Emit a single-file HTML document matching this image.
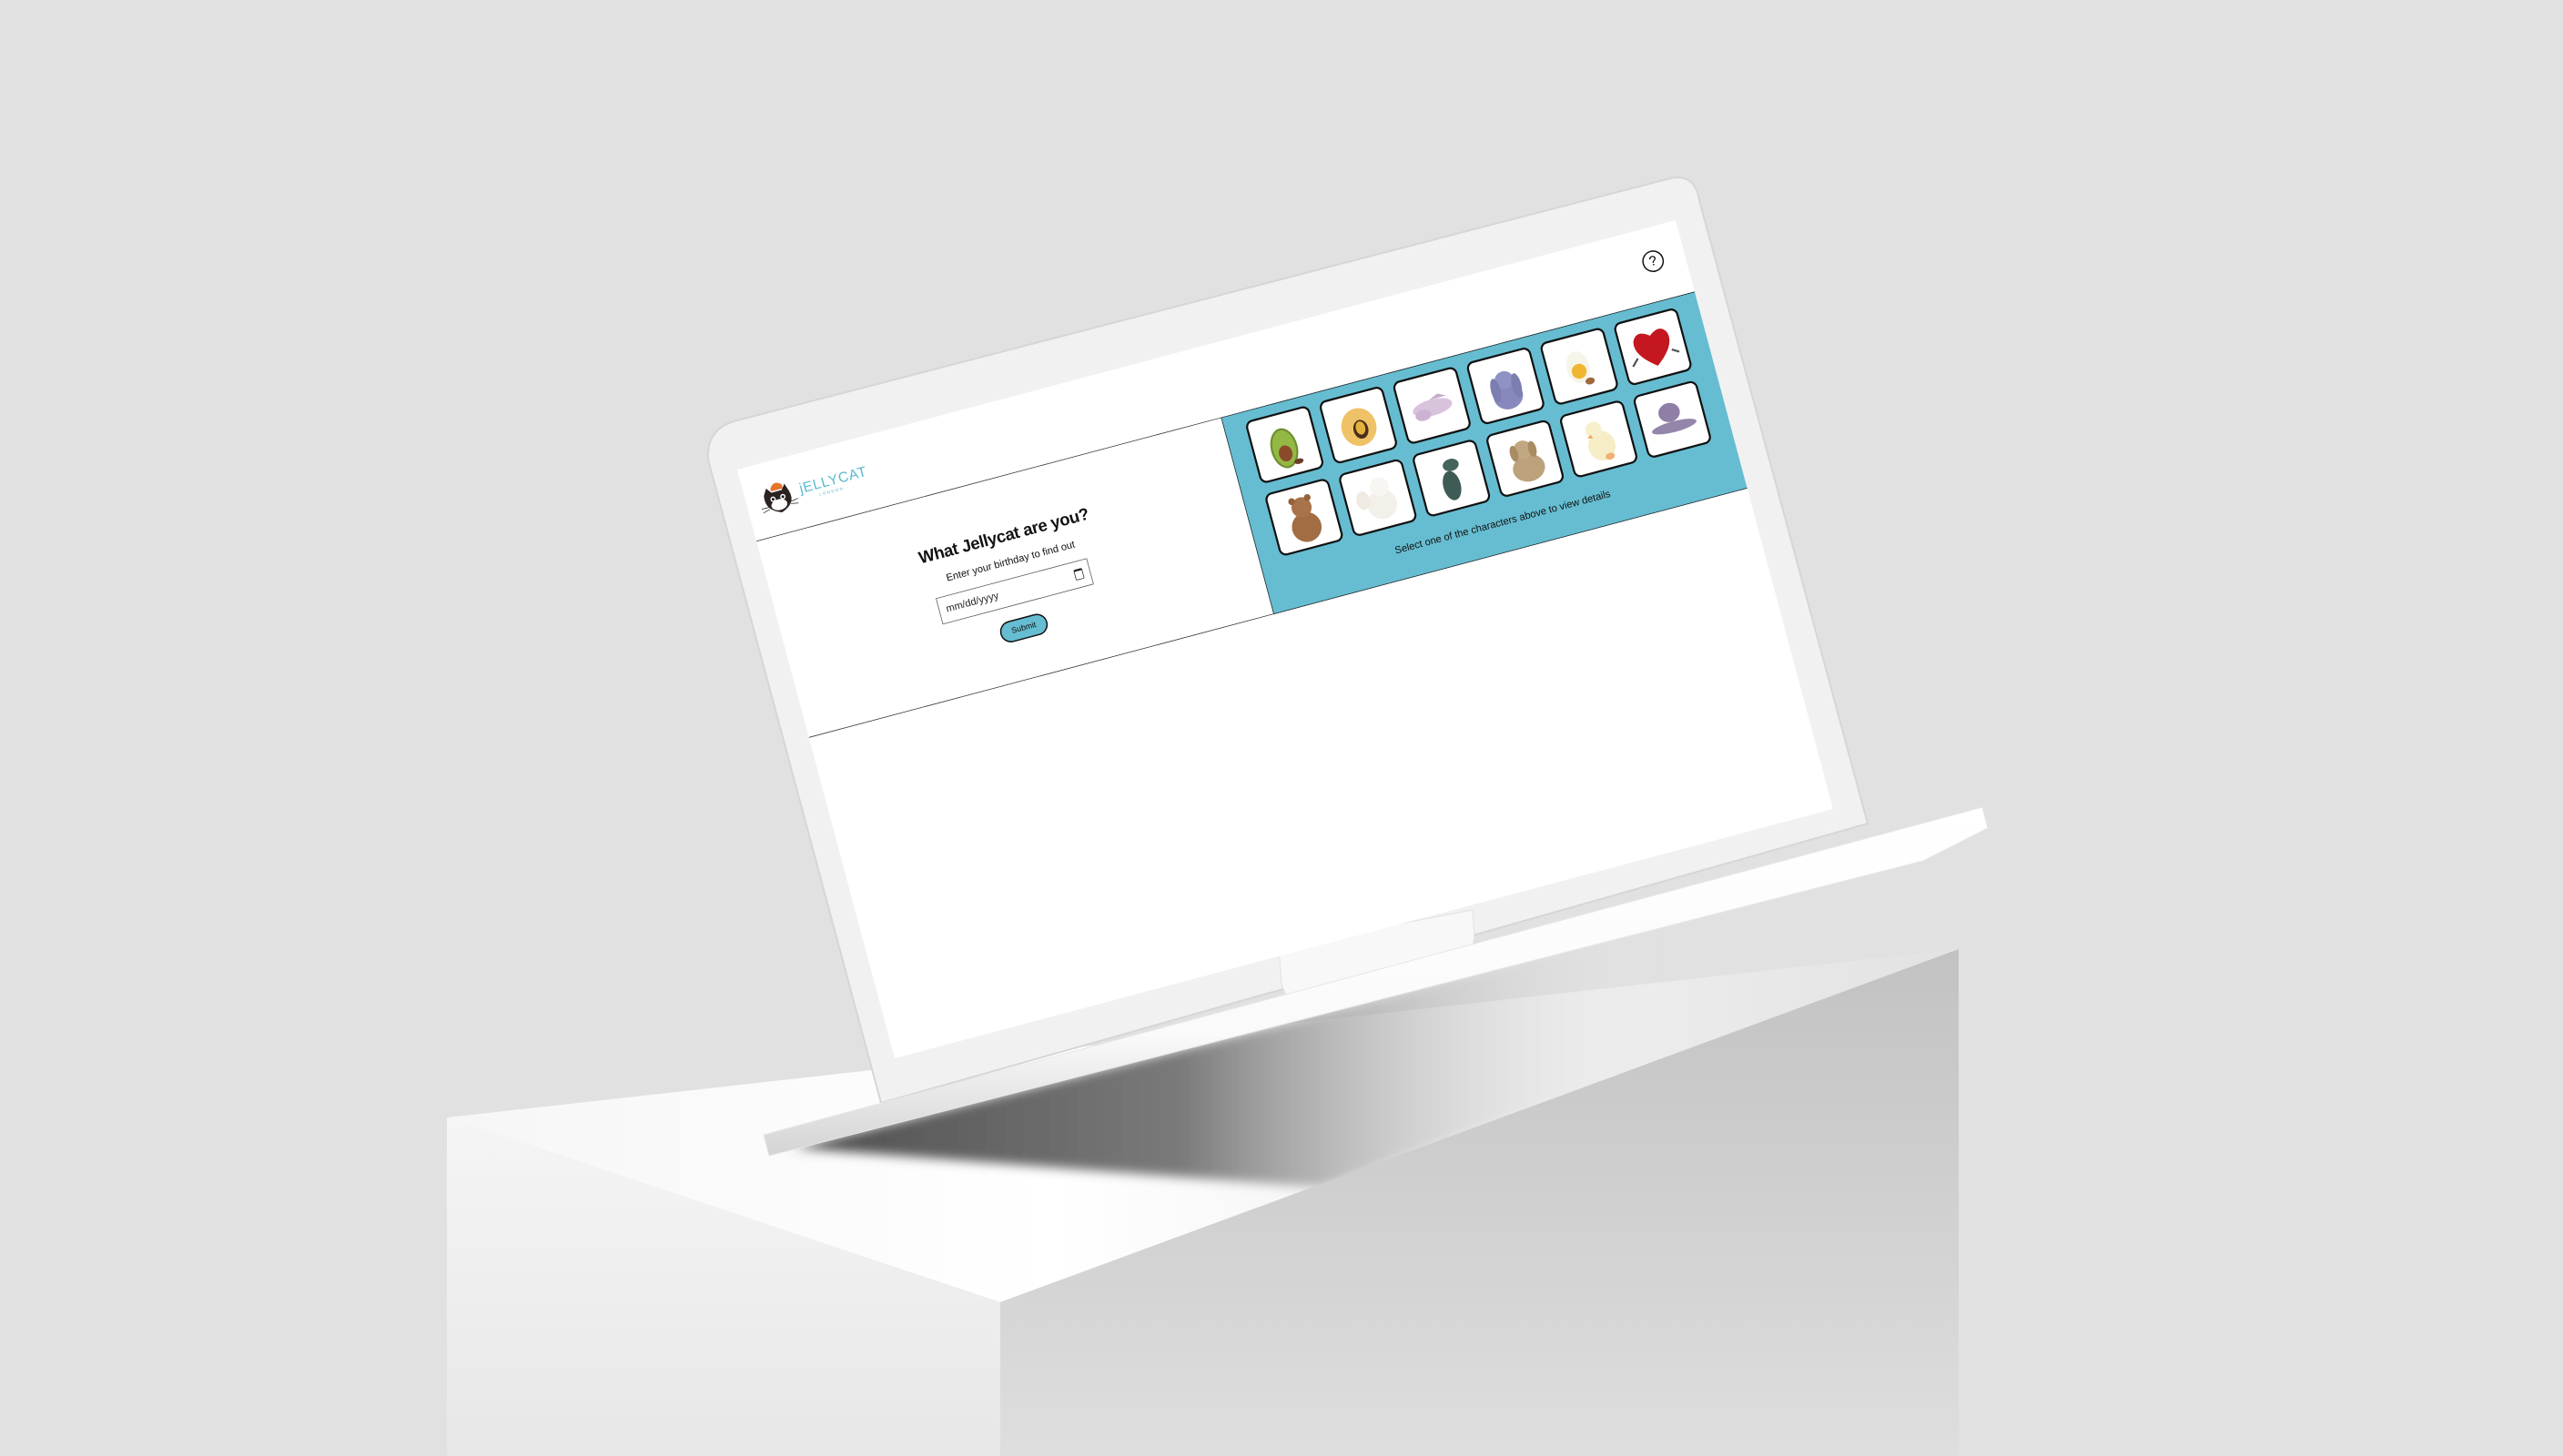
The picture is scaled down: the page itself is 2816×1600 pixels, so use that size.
<!DOCTYPE html>
<html><head><meta charset="utf-8"><style>
html,body{margin:0;padding:0;width:2816px;height:1600px;overflow:hidden;background:#e1e1e1;font-family:"Liberation Sans",sans-serif}
#scene{position:absolute;left:0;top:0}
#over{position:absolute;left:0;top:0}
#screen{position:absolute;left:0;top:0;width:1440px;height:900px;background:#fff;transform-origin:0 0;transform:matrix(0.71597,-0.19028,0.19222,0.71889,810,516);overflow:hidden}
.abs{position:absolute}
.card{position:absolute;width:98px;height:96px;background:#fff;border:3px solid #111;border-radius:11px;box-sizing:border-box;overflow:hidden}
.card svg{position:absolute;left:0;top:0}
</style></head><body>
<svg id="scene" width="2816" height="1600" viewBox="0 0 2816 1600">
<defs>
<linearGradient id="top" x1="0" y1="0" x2="1" y2="0"><stop offset="0" stop-color="#f6f6f6"/><stop offset="0.4" stop-color="#ffffff"/><stop offset="1" stop-color="#e2e2e2"/></linearGradient>
<linearGradient id="right" x1="0" y1="0" x2="0" y2="1"><stop offset="0" stop-color="#c2c2c2"/><stop offset="1" stop-color="#dedede"/></linearGradient>
<linearGradient id="left" x1="0" y1="0" x2="0" y2="1"><stop offset="0" stop-color="#f5f5f5"/><stop offset="1" stop-color="#e7e7e7"/></linearGradient>
<linearGradient id="sh" x1="0" y1="0" x2="1" y2="0"><stop offset="0" stop-color="#4f4f4f"/><stop offset="0.45" stop-color="#7a7a7a"/><stop offset="1" stop-color="#e8e8e8" stop-opacity="0"/></linearGradient>
<linearGradient id="base" x1="0" y1="0" x2="0" y2="1"><stop offset="0" stop-color="#ffffff"/><stop offset="0.65" stop-color="#fafafa"/><stop offset="1" stop-color="#d4d4d4"/></linearGradient>
<filter id="bl"><feGaussianBlur stdDeviation="6"/></filter>
</defs>
<polygon points="491,1228 2152,1043 1099,1431" fill="url(#top)"/>
<polygon points="880,1262 1453,1305 1820,1170 1820,1020 870,1262" fill="url(#sh)" filter="url(#bl)"/>
<polygon points="1099,1431 2152,1043 2152,1600 1099,1600" fill="url(#right)"/>
<polygon points="491,1228 1099,1431 1099,1600 491,1600" fill="url(#left)"/>
<path d="M778 505 Q776 470 810 462 L1835 196 Q1862 190 1867 220 L2052 905 L968 1212 Z" fill="#f1f1f1" stroke="#d6d6d6" stroke-width="2"/>
<path d="M1405 1040 L1618 1000 L1620 1030 Q1615 1060 1590 1075 L1450 1105 Q1415 1112 1408 1080 Z" fill="#f8f8f8" stroke="#e2e2e2"/>
<polygon points="839,1247 2178,887 2184,910 2113,946 845,1270" fill="url(#base)" stroke="#e6e6e6" stroke-width="1"/>
</svg>

<div id="screen">
  <svg class="abs" style="left:18px;top:26px" width="60" height="60" viewBox="0 0 60 60">
    <path d="M22 14 Q30 2 40 12 L40 18 L22 18 Z" fill="#e8742c"/>
    <path d="M10 22 L16 12 L22 20 L38 20 L44 12 L48 24 Q54 44 30 52 Q6 44 10 22 Z" fill="#2a2320"/>
    <ellipse cx="29" cy="40" rx="12" ry="8" fill="#fff"/>
    <circle cx="22" cy="30" r="4" fill="#fff"/><circle cx="37" cy="30" r="4" fill="#fff"/>
    <circle cx="22" cy="30" r="2" fill="#111"/><circle cx="37" cy="30" r="2" fill="#111"/>
    <path d="M2 40 L14 40 M3 46 L14 43 M46 40 L58 38 M46 43 L57 45" stroke="#222" stroke-width="1"/>
  </svg>
  <div class="abs" style="left:82px;top:40px;color:#5bbad0;font-size:21px;letter-spacing:1px">jELLYCAT</div>
  <div class="abs" style="left:108px;top:65px;color:#5bbad0;font-size:6px;letter-spacing:2px">LONDON</div>
  <div class="abs" style="left:1376px;top:34px;width:28px;height:28px;border:2.5px solid #111;border-radius:50%;text-align:center;font-size:20px;line-height:28px">?</div>
  <div class="abs" style="left:0;top:109px;width:713px;height:0;border-top:1.5px solid #333"></div>
  <div class="abs" style="left:0;top:409px;width:713px;height:0;border-top:1.5px solid #333"></div>
  <div class="abs" style="left:0;top:182px;width:713px;text-align:center;font-size:25px;font-weight:bold;color:#111;letter-spacing:-0.5px">What Jellycat are you?</div>
  <div class="abs" style="left:0;top:226px;width:713px;text-align:center;font-size:15px;color:#111">Enter your birthday to find out</div>
  <div class="abs" style="left:235px;top:259px;width:232px;height:40px;border:1.5px solid #555;box-sizing:border-box;font-size:15px;line-height:38px;padding-left:10px;color:#222;white-space:nowrap">mm/dd/yyyy
    <div class="abs" style="right:10px;top:11px;width:11px;height:12px;border:1.5px solid #222;border-top-width:3px;border-radius:2px"></div></div>
  <div class="abs" style="left:314px;top:319px;width:72px;height:32px;background:#66bdd1;border:2.5px solid #111;border-radius:16px;box-sizing:border-box;text-align:center;font-size:12px;line-height:27px;color:#111">Submit</div>
  <div class="abs" style="left:713px;top:109px;width:727px;height:301px;background:#66bdd1;border-top:1.5px solid #222;border-bottom:1.5px solid #222;border-left:1.5px solid #222;box-sizing:border-box"></div>
  <div class="abs" style="left:713px;top:357px;width:727px;text-align:center;font-size:15px;color:#111">Select one of the characters above to view details</div>

  <div class="card" style="left:745px;top:124px"><svg width="92" height="90"><ellipse cx="44" cy="50" rx="20" ry="30" fill="#6f8f32"/><ellipse cx="44" cy="50" rx="17" ry="27" fill="#93b844"/><ellipse cx="44" cy="58" rx="10" ry="12" fill="#8a4a2a"/><ellipse cx="60" cy="74" rx="7" ry="4" fill="#6a3f2a"/></svg></div>
  <div class="card" style="left:858px;top:124px"><svg width="92" height="90"><ellipse cx="46" cy="48" rx="26" ry="28" fill="#efc267"/><ellipse cx="48" cy="52" rx="11" ry="14" fill="#4a2e1c"/><ellipse cx="48" cy="50" rx="7" ry="10" fill="#e2b23c"/></svg></div>
  <div class="card" style="left:971px;top:124px"><svg width="92" height="90"><ellipse cx="46" cy="48" rx="30" ry="12" fill="#d9c3dc"/><ellipse cx="30" cy="56" rx="12" ry="8" fill="#cdb3d3"/><path d="M44 36 L58 30 L70 36 Z" fill="#c7a9cc"/></svg></div>
  <div class="card" style="left:1084px;top:124px"><svg width="92" height="90"><ellipse cx="46" cy="60" rx="22" ry="20" fill="#8789bd"/><ellipse cx="46" cy="36" rx="14" ry="13" fill="#9092c6"/><ellipse cx="30" cy="48" rx="7" ry="18" fill="#7c7eb2"/><ellipse cx="62" cy="48" rx="7" ry="18" fill="#7c7eb2"/></svg></div>
  <div class="card" style="left:1197px;top:124px"><svg width="92" height="90"><ellipse cx="44" cy="46" rx="17" ry="24" fill="#f7f4ea"/><circle cx="44" cy="52" r="11" fill="#f0b531"/><ellipse cx="56" cy="70" rx="7" ry="5" fill="#a0693e"/></svg></div>
  <div class="card" style="left:1310px;top:124px"><svg width="92" height="90"><path d="M46 74 Q14 50 20 30 Q28 14 46 28 Q64 14 72 30 Q78 50 46 74 Z" fill="#c4171f"/><path d="M20 56 L10 66 M72 56 L82 62" stroke="#555" stroke-width="3"/></svg></div>
  <div class="card" style="left:745px;top:235px"><svg width="92" height="90"><ellipse cx="46" cy="60" rx="22" ry="22" fill="#a26d43"/><circle cx="46" cy="30" r="15" fill="#a8734a"/><circle cx="34" cy="18" r="5" fill="#94623b"/><circle cx="58" cy="18" r="5" fill="#94623b"/></svg></div>
  <div class="card" style="left:858px;top:235px"><svg width="92" height="90"><ellipse cx="50" cy="56" rx="22" ry="22" fill="#f3f0ea"/><circle cx="52" cy="30" r="14" fill="#f8f6f2"/><ellipse cx="24" cy="44" rx="10" ry="14" fill="#efebe3"/></svg></div>
  <div class="card" style="left:971px;top:235px"><svg width="92" height="90"><ellipse cx="44" cy="56" rx="13" ry="22" fill="#3f5b56"/><ellipse cx="50" cy="26" rx="12" ry="9" fill="#46635d"/></svg></div>
  <div class="card" style="left:1084px;top:235px"><svg width="92" height="90"><ellipse cx="48" cy="60" rx="24" ry="20" fill="#bca27a"/><circle cx="46" cy="32" r="14" fill="#c2a882"/><ellipse cx="32" cy="34" rx="6" ry="12" fill="#aa8c63"/><ellipse cx="60" cy="34" rx="6" ry="12" fill="#aa8c63"/></svg></div>
  <div class="card" style="left:1197px;top:235px"><svg width="92" height="90"><ellipse cx="48" cy="56" rx="20" ry="22" fill="#f6edc6"/><circle cx="42" cy="30" r="12" fill="#f8f0cc"/><path d="M36 36 L30 40 L38 42 Z" fill="#eea75a"/><ellipse cx="56" cy="74" rx="7" ry="5" fill="#f2b075"/></svg></div>
  <div class="card" style="left:1310px;top:235px"><svg width="92" height="90"><ellipse cx="44" cy="34" rx="16" ry="14" fill="#8f7fa6"/><ellipse cx="46" cy="56" rx="34" ry="8" fill="#9485ab"/></svg></div>
</div>
</body></html>
